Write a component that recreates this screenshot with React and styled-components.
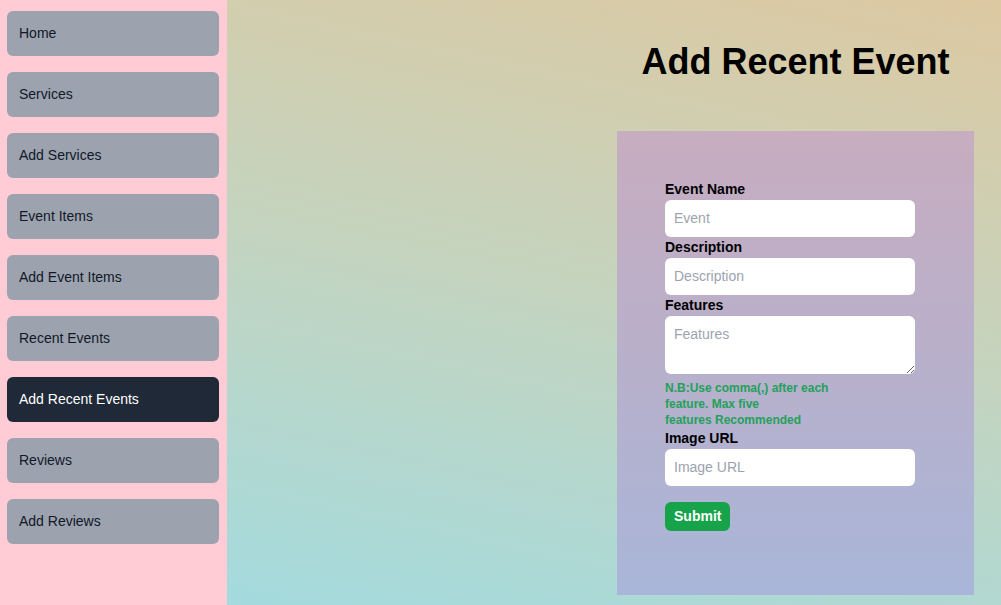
import React from "react";
import styled, { createGlobalStyle } from "styled-components";

const GlobalStyle = createGlobalStyle`
  html, body { margin: 0; padding: 0; }
  body { font-family: "Liberation Sans", Arial, sans-serif; }
  * { box-sizing: border-box; }
`;

const Page = styled.div`
  display: flex;
  min-height: 100vh;
`;

const Sidebar = styled.nav`
  width: 227px;
  flex-shrink: 0;
  background: #ffccd5;
  padding: 11px 8px 0 7px;
  display: flex;
  flex-direction: column;
  gap: 16px;
`;

const NavButton = styled.a`
  height: 45px;
  display: flex;
  align-items: center;
  padding: 0 12px 2px;
  border-radius: 6px;
  font-size: 14px;
  text-decoration: none;
  cursor: pointer;
  background: ${(p) => (p.$active ? "#1f2937" : "#9ca3af")};
  color: ${(p) => (p.$active ? "#ffffff" : "#111827")};
`;

const Main = styled.main`
  flex: 1;
  display: flex;
  justify-content: flex-end;
  padding-right: 27px;
  background: linear-gradient(12deg, #a4dbde 0%, #c4d4bf 50%, #ddc9a2 100%);
`;

const Column = styled.div`
  width: 357px;
  display: flex;
  flex-direction: column;
  align-items: center;
`;

const Title = styled.h1`
  margin: 42px 0 0;
  font-size: 36px;
  line-height: 40px;
  font-weight: 700;
  color: #000;
`;

const Card = styled.div`
  width: 100%;
  margin-top: 49px;
  padding: 48px 48px 64px;
  background: linear-gradient(to bottom, #c7adc0 0%, #b8b0cb 50%, #a9b6d9 100%);
`;

const Form = styled.form`
  width: 250px;
  display: flex;
  flex-direction: column;
`;

const Label = styled.label`
  font-size: 14px;
  line-height: 21px;
  font-weight: 700;
  color: #000;
`;

const Input = styled.input`
  width: 250px;
  height: 37px;
  border: none;
  border-radius: 6px;
  padding: 0 9px 2px;
  font-family: inherit;
  font-size: 14px;
  background: #fff;
  outline: none;
  &::placeholder { color: #9ca3af; }
`;

const TextArea = styled.textarea`
  width: 250px;
  height: 58px;
  border: none;
  border-radius: 6px;
  padding: 8px 9px;
  font-family: inherit;
  font-size: 14px;
  line-height: 20px;
  background: #fff;
  outline: none;
  display: block;
  &::placeholder { color: #9ca3af; }
`;

const Note = styled.p`
  margin: 6px 0 0;
  font-size: 12px;
  line-height: 16px;
  font-weight: 700;
  color: #23a05a;
  span { display: block; }
`;

const SubmitButton = styled.button`
  align-self: flex-start;
  margin-top: 16px;
  height: 29px;
  padding: 0 9px 2px;
  border: none;
  border-radius: 6px;
  background: #16a34a;
  color: #fff;
  font-family: inherit;
  font-size: 14px;
  font-weight: 700;
  cursor: pointer;
`;

const navItems = [
  "Home",
  "Services",
  "Add Services",
  "Event Items",
  "Add Event Items",
  "Recent Events",
  "Add Recent Events",
  "Reviews",
  "Add Reviews",
];

export default function App() {
  return (
    <>
      <GlobalStyle />
      <Page>
        <Sidebar>
          {navItems.map((item) => (
            <NavButton key={item} $active={item === "Add Recent Events"}>
              {item}
            </NavButton>
          ))}
        </Sidebar>
        <Main>
          <Column>
            <Title>Add Recent Event</Title>
            <Card>
              <Form onSubmit={(e) => e.preventDefault()}>
                <Label>Event Name</Label>
                <Input placeholder="Event" />
                <Label>Description</Label>
                <Input placeholder="Description" />
                <Label>Features</Label>
                <TextArea placeholder="Features" />
                <Note>
                  <span>N.B:Use comma(,) after each</span>
                  <span>feature. Max five</span>
                  <span>features Recommended</span>
                </Note>
                <Label>Image URL</Label>
                <Input placeholder="Image URL" />
                <SubmitButton type="submit">Submit</SubmitButton>
              </Form>
            </Card>
          </Column>
        </Main>
      </Page>
    </>
  );
}
